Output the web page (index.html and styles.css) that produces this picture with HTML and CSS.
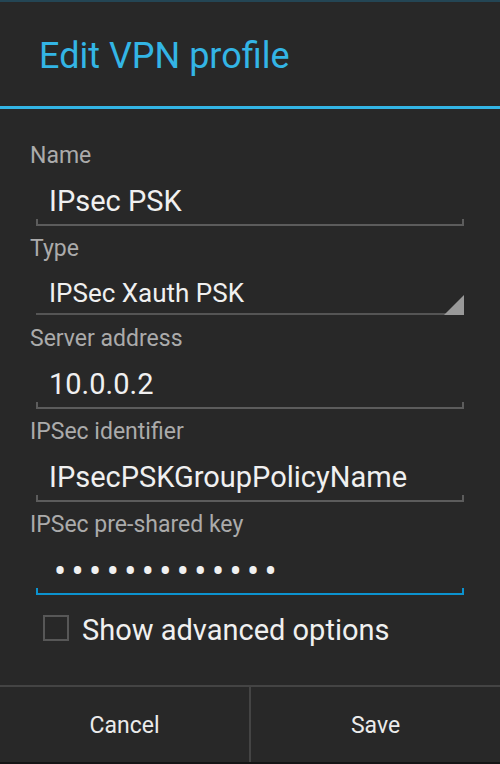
FILE: index.html
```html
<!DOCTYPE html>
<html>
<head>
<meta charset="utf-8">
<link rel="stylesheet" href="styles.css">
</head>
<body>
<div class="dialog">
  <div class="header"><span class="title">Edit VPN profile</span></div>
  <div class="body">
    <div class="field">
      <div class="label">Name</div>
      <div class="edit">
        <div class="value">IPsec PSK</div>
        <div class="line"></div>
      </div>
    </div>
    <div class="field">
      <div class="label">Type</div>
      <div class="spinner">
        <div class="value spin-value">IPSec Xauth PSK</div>
        <div class="sline"></div>
        <svg class="tri" width="20" height="20" viewBox="0 0 20 20"><polygon points="20,0 20,20 0,20" fill="#999999"/></svg>
      </div>
    </div>
    <div class="field">
      <div class="label">Server address</div>
      <div class="edit">
        <div class="value">10.0.0.2</div>
        <div class="line"></div>
      </div>
    </div>
    <div class="field">
      <div class="label">IPSec identifier</div>
      <div class="edit">
        <div class="value">IPsecPSKGroupPolicyName</div>
        <div class="line"></div>
      </div>
    </div>
    <div class="field">
      <div class="label">IPSec pre-shared key</div>
      <div class="edit">
        <div class="value dots">•••••••••••••</div>
        <div class="line focus"></div>
      </div>
    </div>
    <div class="check">
      <div class="box"></div>
      <div class="check-label">Show advanced options</div>
    </div>
  </div>
  <div class="buttons">
    <div class="btn">Cancel</div>
    <div class="sep"></div>
    <div class="btn">Save</div>
  </div>
</div>
</body>
</html>
```

FILE: styles.css
```css
html, body {
  margin: 0;
  padding: 0;
  background: #282828;
}
.dialog {
  width: 500px;
  height: 764px;
  display: flex;
  flex-direction: column;
  background: #282828;
  font-family: Roboto, "Noto Sans", sans-serif;
  box-sizing: border-box;
  border-bottom: 2px solid #151515;
}
.header {
  border-top: 2px solid #244655;
  padding: 34px 0 30px 39px;
  border-bottom: 3px solid #33b5e5;
  line-height: 40px;
  height: 40px;
}
.title {
  color: #33b5e5;
  font-size: 36px;
}
.body {
  flex: 1;
  padding: 32px 36px 0 30px;
}
.label {
  font-size: 23px;
  line-height: 30px;
  height: 30px;
  color: #ababab;
}
.edit {
  height: 63px;
  margin-left: 6px;
  box-sizing: border-box;
  padding-top: 14px;
}
.value {
  font-size: 29px;
  line-height: 32px;
  height: 32px;
  color: #f0f0f0;
  padding-left: 13px;
  white-space: nowrap;
}
.line {
  margin-top: 2px;
  height: 5px;
  border: 2px solid #5c5c5c;
  border-top: none;
}
.line.focus {
  border-color: #0c93cf;
}
.dots {
  font-size: 36px;
  letter-spacing: 5.4px;
  padding-left: 18px;
  padding-top: 2px;
  height: 30px;
}
.spinner {
  height: 60px;
  margin-left: 6px;
  box-sizing: border-box;
  padding-top: 13px;
  display: flex;
  flex-direction: column;
  position: relative;
}
.spin-value {
  font-size: 26px;
}
.sline {
  margin-top: 4px;
  height: 2px;
  background: #555555;
}
.tri {
  position: absolute;
  right: 0;
  top: 31px;
}
.check {
  display: flex;
  align-items: flex-start;
  margin-top: 9px;
  margin-left: 13px;
}
.box {
  width: 22px;
  height: 22px;
  border: 2px solid #575757;
  margin-top: 3px;
  margin-right: 13px;
}
.check-label {
  font-size: 29px;
  line-height: 36px;
  color: #f0f0f0;
}
.buttons {
  display: flex;
  border-top: 2px solid #444444;
  height: 75px;
}
.btn {
  flex: 1;
  text-align: center;
  font-size: 23px;
  line-height: 72px;
  padding-top: 3px;
  color: #ebebeb;
}
.sep {
  width: 2px;
  background: #444444;
}
```
